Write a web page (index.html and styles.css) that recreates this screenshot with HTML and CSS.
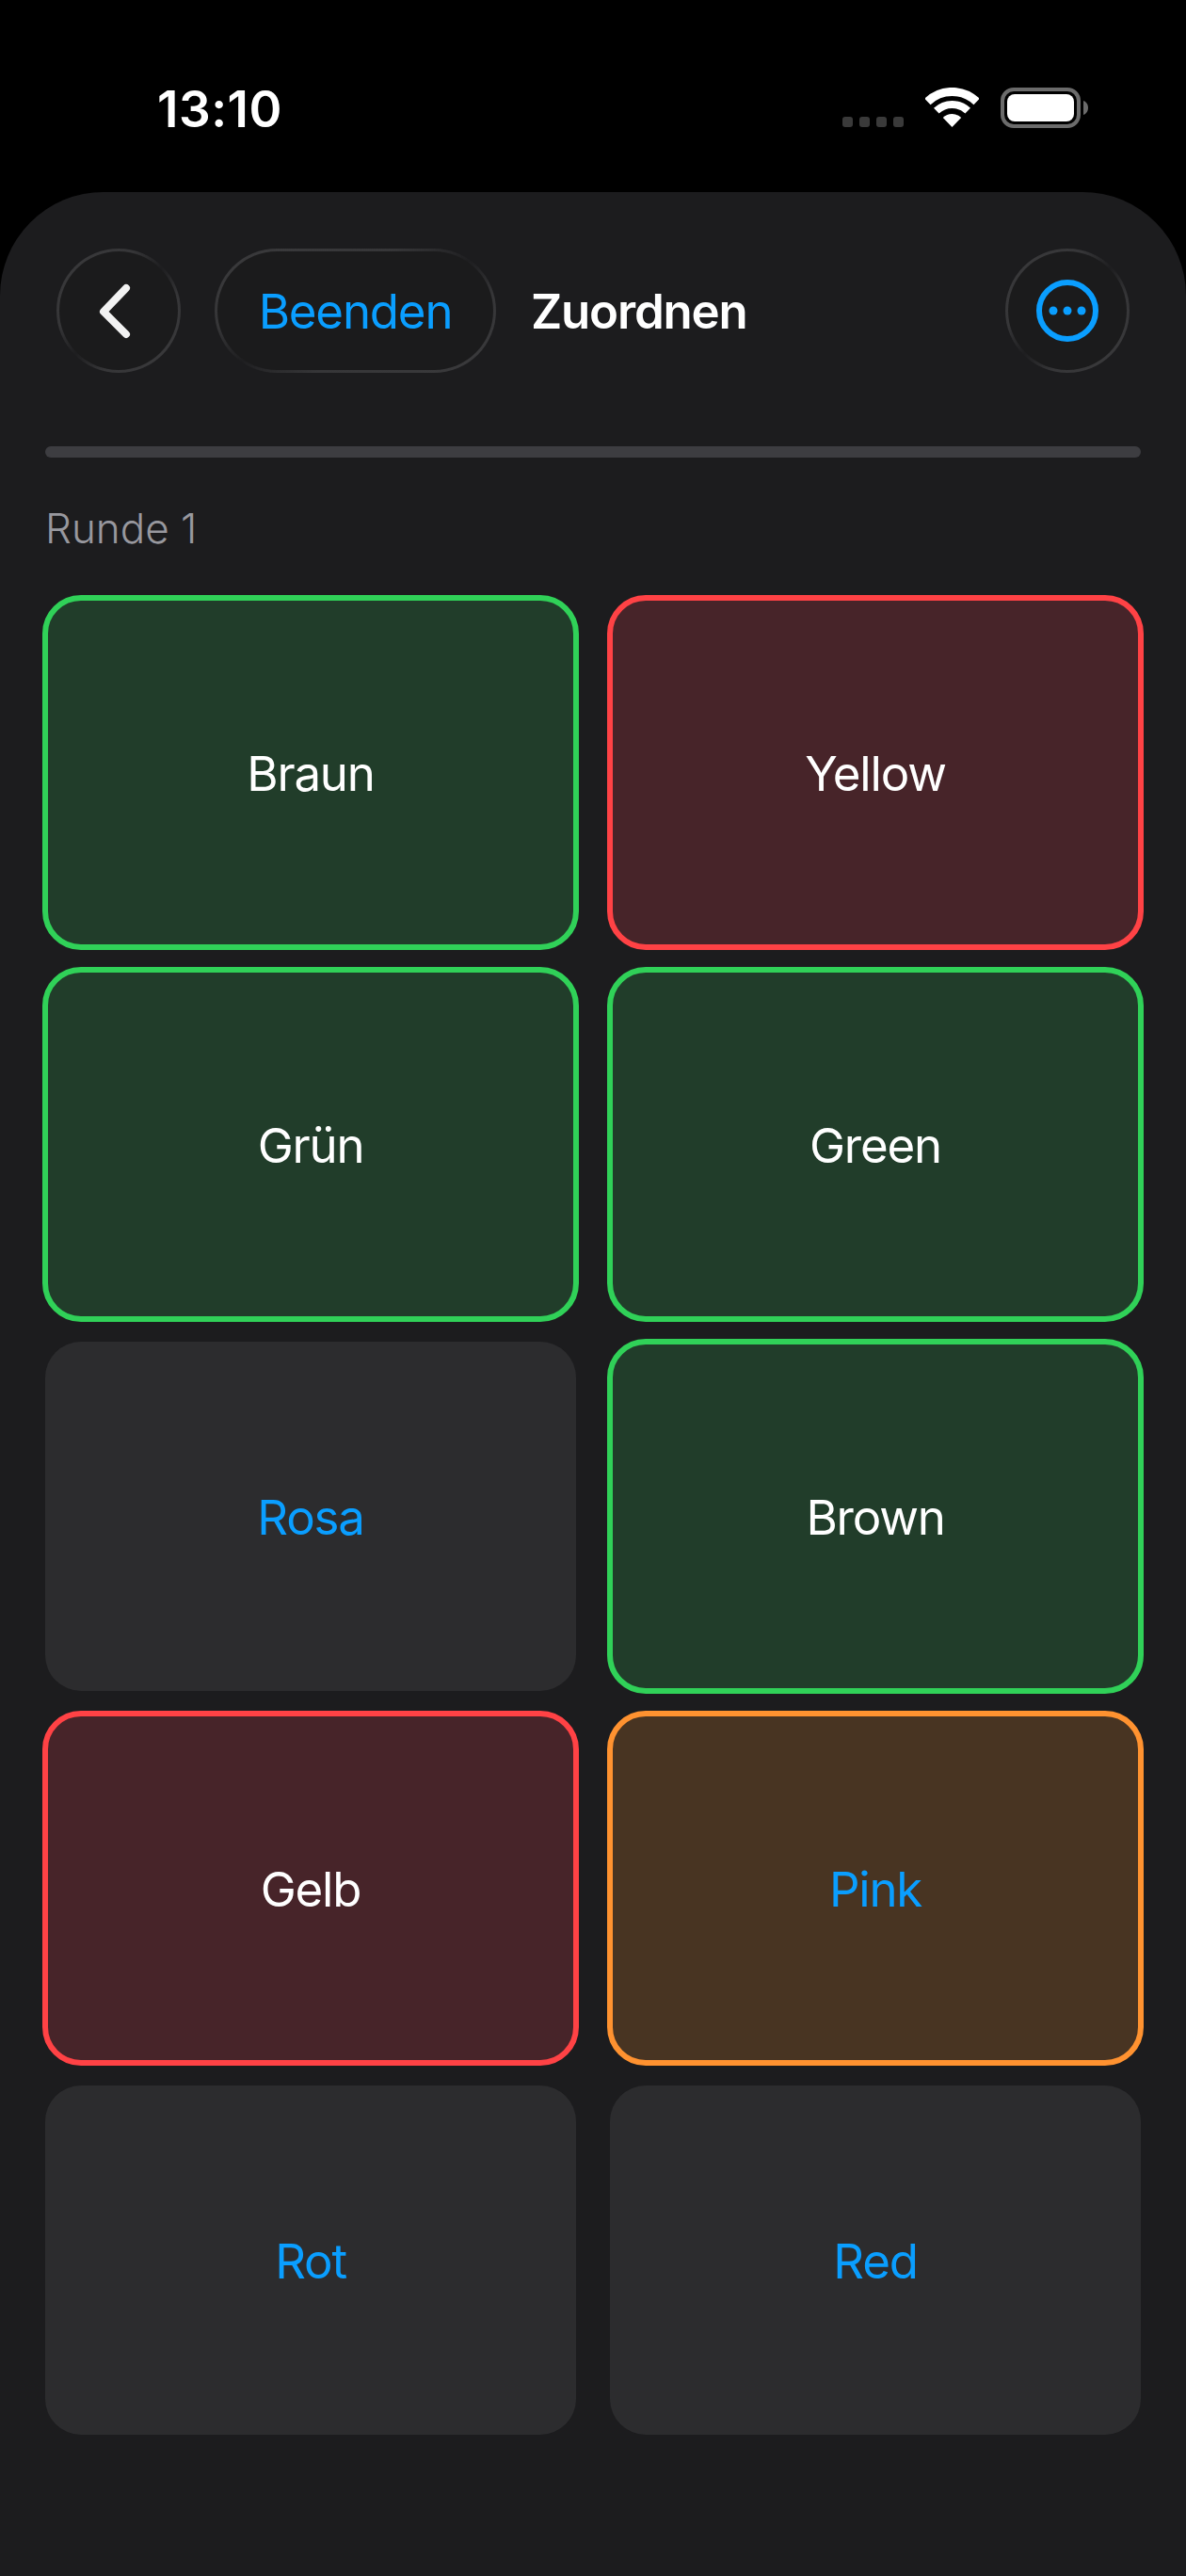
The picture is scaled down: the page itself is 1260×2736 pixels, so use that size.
FILE: index.html
```html
<!DOCTYPE html>
<html lang="de">
<head>
    <meta charset="UTF-8">
    <meta name="viewport" content="width=device-width, initial-scale=1.0">
    <title>Zuordnen</title>
    <link rel="stylesheet" href="styles.css">
</head>
<body>
    <div class="status-bar">
        <span class="time">13:10</span>
        <div class="status-icons">
            <div class="signal"><i></i><i></i><i></i><i></i></div>
            <svg class="wifi" width="57" height="42" viewBox="0 0 57 42" fill="none" stroke="#fff">
                <path d="M2.4 15A37.5 37.5 0 0 1 54.6 15" stroke-width="9"/>
                <path d="M11.8 24.7A24 24 0 0 1 45.2 24.7" stroke-width="8"/>
                <path d="M28.5 42L18.8 32A14 14 0 0 1 38.2 32Z" fill="#fff" stroke="none"/>
            </svg>
            <svg class="battery" width="93" height="43" viewBox="0 0 93 43">
                <rect x="2" y="2" width="81" height="39" rx="12" fill="none" stroke="#6b6b6b" stroke-width="4"/>
                <rect x="7" y="7" width="71" height="29" rx="8" fill="#fff"/>
                <path d="M88 14C91 15 93 18 93 21.5S91 28 88 29Z" fill="#6b6b6b"/>
            </svg>
        </div>
    </div>

    <div class="panel">
        <div class="header">
            <button class="round-btn">
                <svg width="132" height="132" viewBox="0 0 132 132" fill="none">
                    <path d="M74 42L50 67L74 91" stroke="#f2f2f2" stroke-width="8" stroke-linecap="round" stroke-linejoin="round"/>
                </svg>
            </button>
            <button class="pill-btn">Beenden</button>
            <span class="title">Zuordnen</span>
            <button class="round-btn menu-btn">
                <svg width="132" height="132" viewBox="0 0 132 132" fill="none">
                    <circle cx="66" cy="66" r="30" stroke="#0a9eff" stroke-width="6"/>
                    <circle cx="51" cy="66" r="4.5" fill="#0a9eff"/>
                    <circle cx="66" cy="66" r="4.5" fill="#0a9eff"/>
                    <circle cx="81" cy="66" r="4.5" fill="#0a9eff"/>
                </svg>
            </button>
        </div>

        <div class="progress"></div>
        <div class="round-label">Runde 1</div>

        <div class="cards">
            <div class="card correct">Braun</div>
            <div class="card wrong">Yellow</div>
            <div class="card correct">Grün</div>
            <div class="card correct">Green</div>
            <div class="card">Rosa</div>
            <div class="card correct">Brown</div>
            <div class="card wrong">Gelb</div>
            <div class="card selected">Pink</div>
            <div class="card">Rot</div>
            <div class="card">Red</div>
        </div>
    </div>
</body>
</html>
```

FILE: styles.css
```css
* {
    box-sizing: border-box;
}
html, body {
    margin: 0;
    height: 100%;
    background-color: #000;
}
body {
    display: flex;
    flex-direction: column;
    font-family: Inter, "Liberation Sans", sans-serif;
    color: #fff;
}

/* status bar */
.status-bar {
    flex: none;
    height: 204px;
    padding: 93px 104px 0 167px;
    display: flex;
    justify-content: space-between;
    align-items: flex-start;
}
.time {
    font-size: 53px;
    font-weight: 600;
    line-height: 46px;
    letter-spacing: 0.5px;
}
.status-icons {
    display: flex;
    align-items: flex-end;
}
.signal {
    display: flex;
    gap: 7px;
    margin-right: 23px;
}
.signal i {
    width: 11px;
    height: 11px;
    border-radius: 3px;
    background-color: #3a3a3a;
}
.wifi {
    display: block;
    margin-right: 23px;
}
.battery {
    display: block;
    margin-bottom: -1px;
}

/* main panel */
.panel {
    flex: 1;
    padding: 60px 48px 0;
    background-color: #1c1c1e;
    border-radius: 110px 110px 0 0;
}
.header {
    display: flex;
    align-items: center;
    padding: 0 12px;
}
/* glass edge: light on two opposite sides, almost gone on the other two */
.round-btn, .pill-btn {
    height: 132px;
    padding: 0;
    display: flex;
    align-items: center;
    justify-content: center;
    border: 3px solid transparent;
    background:
        linear-gradient(#1b1b1c, #1b1b1c) padding-box,
        linear-gradient(to bottom right, #3a3a3c 0%, #363638 32%, #1e1e20 50%, #363638 68%, #3a3a3c 100%) border-box;
    font-family: inherit;
}
.round-btn {
    width: 132px;
    border-radius: 50%;
}
.round-btn svg {
    flex: none;
}
.pill-btn {
    width: 299px;
    margin-left: 36px;
    border-radius: 66px;
    color: #0a9eff;
    font-size: 51px;
    letter-spacing: -1.2px;
}
.title {
    margin-left: 37px;
    font-size: 51px;
    font-weight: 600;
    letter-spacing: -1.2px;
}
.menu-btn {
    margin-left: auto;
}
.progress {
    height: 12px;
    margin-top: 78px;
    border-radius: 6px;
    background-color: #3d3d41;
}
.round-label {
    margin-top: 40px;
    font-size: 44px;
    font-weight: 300;
    line-height: 70px;
    color: #98989e;
}

/* answer grid */
.cards {
    margin-top: 39px;
    display: grid;
    grid-template-columns: 564px 564px;
    grid-auto-rows: 371px;
    gap: 24px 36px;
}
.card {
    display: flex;
    align-items: center;
    justify-content: center;
    padding-top: 1px;
    border-radius: 38px;
    background-color: #2c2c2e;
    color: #0a9eff;
    font-size: 51px;
    letter-spacing: -1.2px;
}
.correct, .wrong, .selected {
    outline: 6px solid;
    outline-offset: -3px;
}
.correct {
    background-color: #213d2a;
    outline-color: #30d158;
    color: #fff;
}
.wrong {
    background-color: #472429;
    outline-color: #ff4245;
    color: #fff;
}
.selected {
    background-color: #483422;
    outline-color: #ff9230;
}
```
